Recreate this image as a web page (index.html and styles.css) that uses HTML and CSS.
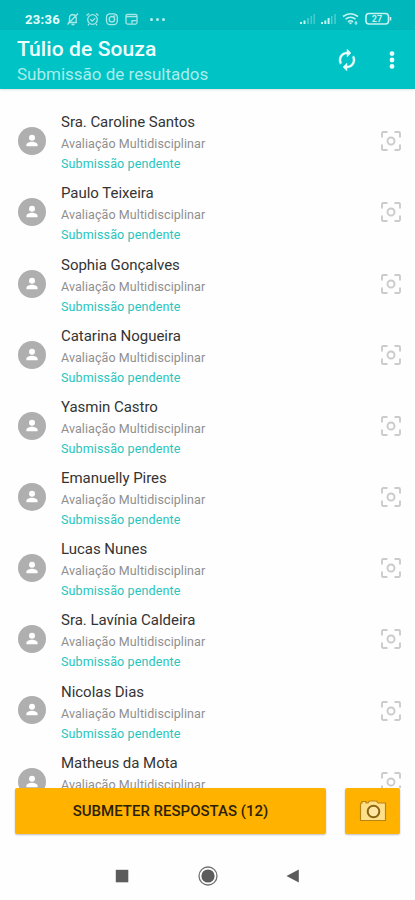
FILE: index.html
```html
<!DOCTYPE html>
<html lang="pt-BR">
<head>
    <meta charset="UTF-8">
    <meta name="viewport" content="width=device-width, initial-scale=1.0">
    <title>Submissão de resultados</title>
    <link rel="stylesheet" href="styles.css">
</head>
<body>
    <svg class="sprite">
        <symbol id="person" viewBox="0 0 28 28">
            <circle cx="14" cy="14" r="14" fill="#afafaf"/>
            <circle cx="14" cy="10.800" r="3" fill="#fff"/>
            <path d="M8.400 19.200v-1.400c0-2 3.600-3 5.600-3s5.600 1 5.600 3v1.400z" fill="#fff"/>
        </symbol>
        <symbol id="focus" viewBox="0 0 20 20">
            <g fill="none" stroke="#cbcbcb" stroke-width="1.900">
                <path d="M1 6.500V2.200Q1 1 2.200 1H6.500M13.500 1h4.300Q19 1 19 2.200V6.500M19 13.500v4.300Q19 19 17.800 19H13.500M6.500 19H2.200Q1 19 1 17.800V13.500"/>
                <circle cx="10" cy="10" r="3.500"/>
            </g>
        </symbol>
    </svg>

    <div class="status-bar">
        <span class="time">23:36</span>
        <svg class="status-left" width="75" height="14" viewBox="0 0 75 14" fill="none" stroke="#a5e8e7" stroke-width="1.300">
            <path d="M2 10.500h9M3.500 10.500V6q0-3.500 3.500-3.500M7 2.500q3 .5 3.200 3.500v4.500M5.500 12.500h3M1.500 12.500 12 1.500"/>
            <circle cx="26.500" cy="7.500" r="4.800"/>
            <path d="M20.500 3.500 23 1.500M32.500 3.500 30 1.500M24.300 7.300l1.900 1.900 3-3M23 12l-1 1.300M30 12l1 1.300"/>
            <rect x="40.500" y="1.800" width="10.800" height="10.800" rx="3.500"/>
            <circle cx="45.900" cy="7.200" r="2.700"/>
            <path d="M47.500 4h2"/>
            <rect x="60" y="2.300" width="11" height="9.800" rx="1.500"/>
            <path d="M60 4.500h11M65.500 8.700h5M66 8.500v3"/>
        </svg>
        <span class="more"><i></i><i></i><i></i></span>
        <svg class="status-right" width="94" height="14" viewBox="0 0 94 14">
            <g fill="#c4f3f1">
                <path d="M1 10h2v2H1zM4.500 8.500h2V12h-2z"/>
                <path d="M8 6h2v6H8zM11.500 4h1.500v8h-1.500zM14.500 2H16v10h-1.500z" opacity=".35"/>
                <path d="M22 10h2v2h-2zM25.300 8.500h2V12h-2zM28.600 6h2v6h-2z"/>
                <path d="M32 4h1.500v8H32zM35.300 2h1.500v10h-1.500z" opacity=".4"/>
            </g>
            <g fill="none" stroke="#c4f3f1" stroke-width="1.600">
                <path d="M44 4.500q7.500-5.500 15 0M46.500 7.200q5-3.800 10 0M49 9.800q2.500-2 5 0"/>
                <rect x="67" y="1.500" width="22.500" height="10.500" rx="3"/>
                <path d="M91.500 5v3.500"/>
            </g>
            <path d="M49.500 10.500h4l-2 2z" fill="#c4f3f1"/>
            <path d="M57 9v4M55.500 11h3" stroke="#c4f3f1"/>
            <text x="78" y="10" class="battery-text">27</text>
        </svg>
    </div>

    <header class="toolbar">
        <div class="titles">
            <h1>Túlio de Souza</h1>
            <p>Submissão de resultados</p>
        </div>
        <svg class="sync" width="24" height="24" viewBox="0 0 24 24" fill="#eafffd" stroke="#eafffd" stroke-width=".4">
            <path d="M12 4V1L8 5l4 4V6c3.310 0 6 2.690 6 6 0 1.010-.25 1.970-.7 2.800l1.460 1.460C19.540 15.030 20 13.570 20 12c0-4.420-3.580-8-8-8zm0 14c-3.310 0-6-2.690-6-6 0-1.010.25-1.970.7-2.800L5.240 7.740C4.460 8.970 4 10.430 4 12c0 4.420 3.580 8 8 8v3l4-4-4-4v3z" transform="matrix(-1 0 0 1 24 0)"/>
        </svg>
        <svg width="6" height="20" viewBox="0 0 6 20" fill="#eafffd">
            <circle cx="3" cy="3.600" r="2.400"/>
            <circle cx="3" cy="10" r="2.400"/>
            <circle cx="3" cy="16.400" r="2.400"/>
        </svg>
    </header>

    <main class="list">
        <div class="row">
            <svg class="avatar"><use href="#person"/></svg>
            <div class="info">
                <div class="name">Sra. Caroline Santos</div>
                <div class="exam">Avaliação Multidisciplinar</div>
                <div class="state">Submissão pendente</div>
            </div>
            <svg class="focus"><use href="#focus"/></svg>
        </div>
        <div class="row">
            <svg class="avatar"><use href="#person"/></svg>
            <div class="info">
                <div class="name">Paulo Teixeira</div>
                <div class="exam">Avaliação Multidisciplinar</div>
                <div class="state">Submissão pendente</div>
            </div>
            <svg class="focus"><use href="#focus"/></svg>
        </div>
        <div class="row">
            <svg class="avatar"><use href="#person"/></svg>
            <div class="info">
                <div class="name">Sophia Gonçalves</div>
                <div class="exam">Avaliação Multidisciplinar</div>
                <div class="state">Submissão pendente</div>
            </div>
            <svg class="focus"><use href="#focus"/></svg>
        </div>
        <div class="row">
            <svg class="avatar"><use href="#person"/></svg>
            <div class="info">
                <div class="name">Catarina Nogueira</div>
                <div class="exam">Avaliação Multidisciplinar</div>
                <div class="state">Submissão pendente</div>
            </div>
            <svg class="focus"><use href="#focus"/></svg>
        </div>
        <div class="row">
            <svg class="avatar"><use href="#person"/></svg>
            <div class="info">
                <div class="name">Yasmin Castro</div>
                <div class="exam">Avaliação Multidisciplinar</div>
                <div class="state">Submissão pendente</div>
            </div>
            <svg class="focus"><use href="#focus"/></svg>
        </div>
        <div class="row">
            <svg class="avatar"><use href="#person"/></svg>
            <div class="info">
                <div class="name">Emanuelly Pires</div>
                <div class="exam">Avaliação Multidisciplinar</div>
                <div class="state">Submissão pendente</div>
            </div>
            <svg class="focus"><use href="#focus"/></svg>
        </div>
        <div class="row">
            <svg class="avatar"><use href="#person"/></svg>
            <div class="info">
                <div class="name">Lucas Nunes</div>
                <div class="exam">Avaliação Multidisciplinar</div>
                <div class="state">Submissão pendente</div>
            </div>
            <svg class="focus"><use href="#focus"/></svg>
        </div>
        <div class="row">
            <svg class="avatar"><use href="#person"/></svg>
            <div class="info">
                <div class="name">Sra. Lavínia Caldeira</div>
                <div class="exam">Avaliação Multidisciplinar</div>
                <div class="state">Submissão pendente</div>
            </div>
            <svg class="focus"><use href="#focus"/></svg>
        </div>
        <div class="row">
            <svg class="avatar"><use href="#person"/></svg>
            <div class="info">
                <div class="name">Nicolas Dias</div>
                <div class="exam">Avaliação Multidisciplinar</div>
                <div class="state">Submissão pendente</div>
            </div>
            <svg class="focus"><use href="#focus"/></svg>
        </div>
        <div class="row">
            <svg class="avatar"><use href="#person"/></svg>
            <div class="info">
                <div class="name">Matheus da Mota</div>
                <div class="exam">Avaliação Multidisciplinar</div>
            </div>
            <svg class="focus"><use href="#focus"/></svg>
        </div>
    </main>

    <div class="actions">
        <button class="submit">SUBMETER RESPOSTAS (12)</button>
        <button class="camera">
            <svg width="28" height="22" viewBox="0 0 28 22">
                <path d="M1.500 20.500V4.500Q1.500 3 3 3V1.500h4V3h2l1.500-2h7L19 3h7.500v17.500z" fill="#ffe08a" stroke="#b98512" stroke-width="1.200"/>
                <circle cx="14.500" cy="11.500" r="5.800" fill="#ffe7a3" stroke="#8a6410" stroke-width="2"/>
            </svg>
        </button>
    </div>

    <nav class="nav-bar">
        <svg width="20" height="22" viewBox="0 0 20 22"><rect x="3.800" y="4.800" width="12.500" height="12.500" fill="#5c5c5c"/></svg>
        <svg width="20" height="22" viewBox="0 0 20 22">
            <circle cx="10" cy="11" r="9" fill="none" stroke="#707070" stroke-width="1.300"/>
            <circle cx="10" cy="11" r="6.600" fill="#5c5c5c"/>
        </svg>
        <svg width="20" height="22" viewBox="0 0 20 22"><path d="M2.500 11 14.800 4.500v13z" fill="#5c5c5c"/></svg>
    </nav>
</body>
</html>
```

FILE: styles.css
```css
* {
    box-sizing: border-box;
}
body {
    margin: 0;
    height: 900px;
    display: flex;
    flex-direction: column;
    overflow: hidden;
    background: #fefefe;
    font-family: Roboto, "Liberation Sans", sans-serif;
}
svg {
    display: block;
    flex-shrink: 0;
}
.sprite {
    position: absolute;
    width: 0;
    height: 0;
}
.status-bar {
    height: 30px;
    flex-shrink: 0;
    display: flex;
    align-items: center;
    padding: 8px 22px 0 25px;
    background: #00b7bb;
    color: #e4fffc;
}
.time {
    width: 41px;
    font-size: 13px;
    font-weight: 700;
    letter-spacing: 0.3px;
}
.more {
    display: flex;
    gap: 3px;
    margin-left: 9px;
}
.more i {
    width: 3px;
    height: 3px;
    border-radius: 50%;
    background: #b9f0ee;
}
.status-right {
    margin-left: auto;
}
.battery-text {
    font-size: 9px;
    font-weight: 700;
    text-anchor: middle;
    fill: #c4f3f1;
}
.toolbar {
    height: 59px;
    flex-shrink: 0;
    display: flex;
    align-items: center;
    padding: 0 20px 0 17px;
    background: #00c3c5;
    box-shadow: 0 1px 2px rgba(0,0,0,0.12);
}
.titles {
    flex: 1;
    padding-top: 4px;
}
.titles h1 {
    margin: 0;
    font-size: 21px;
    line-height: 26px;
    font-weight: 500;
    letter-spacing: 0.1px;
    color: #f0fffe;
}
.titles p {
    margin: 0;
    font-size: 17px;
    line-height: 25px;
    color: #a9eeeb;
}
.sync {
    margin-right: 30px;
}
.list {
    height: 699px;
    flex-shrink: 0;
    padding-top: 17.3px;
    overflow: hidden;
}
.row {
    display: flex;
    height: 71.17px;
    padding: 6px 14px 0 18px;
}
.avatar {
    width: 28px;
    height: 28px;
    margin: 14.9px 15px 0 0;
}
.info {
    flex: 1;
}
.name {
    font-size: 15px;
    line-height: 21px;
    letter-spacing: -0.03px;
    color: #343434;
}
.exam {
    font-size: 12.5px;
    line-height: 21px;
    letter-spacing: 0.08px;
    color: #8f8f8f;
}
.state {
    font-size: 12.5px;
    line-height: 20px;
    letter-spacing: 0.13px;
    color: #27c5bd;
}
.focus {
    width: 20px;
    height: 20px;
    margin-top: 19px;
}
.actions {
    display: flex;
    flex-shrink: 0;
    justify-content: space-between;
    height: 64px;
    padding: 0 15px;
}
button {
    height: 46px;
    padding: 0;
    border: none;
    border-radius: 2px;
    background: #ffb300;
    box-shadow: 0 1px 2px rgba(0,0,0,0.25);
}
.submit {
    width: 311px;
    font-family: inherit;
    font-size: 15px;
    font-weight: 500;
    color: #2c2108;
}
.camera {
    width: 55px;
    display: flex;
    align-items: center;
    justify-content: center;
}
.nav-bar {
    flex: 1;
    display: flex;
    align-items: center;
    justify-content: center;
    gap: 66px;
    padding-bottom: 1px;
}
```
